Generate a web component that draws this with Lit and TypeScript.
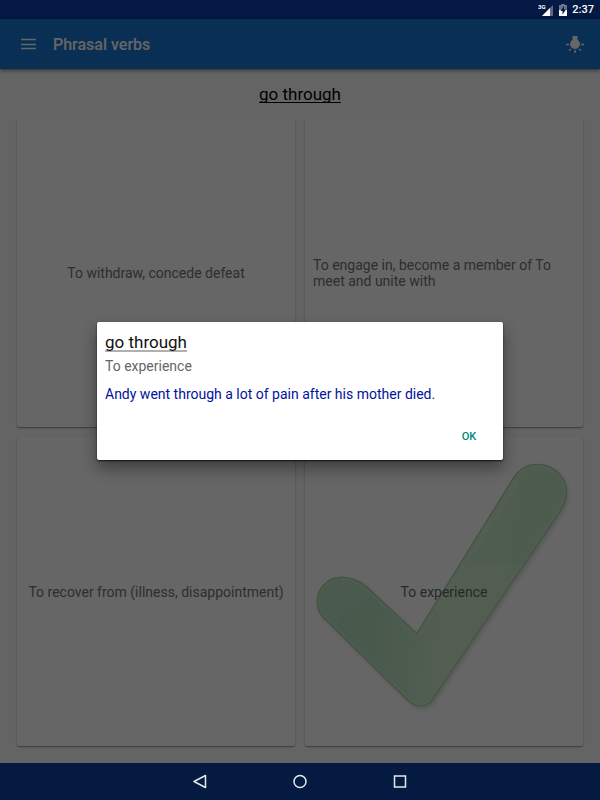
import { LitElement, html, css, svg } from "lit";
import { customElement, property, state } from "lit/decorators.js";

@customElement("answer-card")
class AnswerCard extends LitElement {
  @property() text = "";
  @property({ type: Boolean }) correct = false;

  static styles = css`
    :host {
      display: grid;
      min-width: 0;
    }
    .card {
      position: relative;
      display: flex;
      align-items: center;
      justify-content: center;
      padding: 8px;
      border: 0;
      border-radius: 2px;
      background: #fff;
      box-shadow: 0 1px 2px rgba(0, 0, 0, 0.35), 0 1px 1px rgba(0, 0, 0, 0.1);
      font: 400 14px/16px Roboto, "Noto Sans", sans-serif;
      color: #737373;
      text-align: left;
    }
    .tick {
      position: absolute;
      inset: 0;
      width: 100%;
      height: 100%;
    }
    .label {
      position: relative;
    }
    .card.correct .label {
      color: #5c6a5e;
    }
  `;

  render() {
    return html`<button class="card ${this.correct ? "correct" : ""}">
      ${this.correct
        ? html`<svg class="tick" viewBox="15 21 834 927" aria-hidden="true">
            <defs>
              <linearGradient id="body" x1="0" y1="0.5" x2="1" y2="0.6">
                <stop offset="0" stop-color="#b3dfbd" />
                <stop offset="0.25" stop-color="#b6e0c0" />
                <stop offset="0.55" stop-color="#cfedcb" />
                <stop offset="1" stop-color="#c2e6c5" />
              </linearGradient>
              <clipPath id="shape">${this.outline("")}</clipPath>
              <filter id="soft" x="-10%" y="-10%" width="120%" height="120%">
                <feGaussianBlur stdDeviation="7" />
              </filter>
            </defs>
            <g transform="translate(5 7)" filter="url(#soft)" opacity="0.14">${this.outline("#000")}</g>
            ${this.outline("url(#body)")}
            <g clip-path="url(#shape)">
              <path
                d="M0 0H849V400Q640 395 480 405Q200 460 105 585L0 700Z"
                fill="#c0e3c6"
                opacity="0.5"
              />
              <path d="M350 612L646 155" stroke="#d3ebd3" stroke-width="24" opacity="0.7" />
              <g fill="none" stroke="#cdebc8" stroke-width="22" opacity="0.5">${this.outline("none")}</g>
              <g fill="none" stroke="#a6d5a0" stroke-width="8">${this.outline("none")}</g>
            </g>
          </svg>`
        : ""}
      <span class="label">${this.text}</span>
    </button>`;
  }

  private outline(fill: string) {
    return svg`<path fill=${fill || "#000"} d="M50 518C50 470 85 440 125 440C152 440 180 450 202 470L350 608L638 145C655 118 680 101 710 101C762 101 801 140 801 183C801 207 793 228 782 245L402 805C385 837 347 838 322 812L75 570C60 556 50 538 50 518Z"/>`;
  }
}

@customElement("app-root")
class AppRoot extends LitElement {
  @state() private open = true;

  private answers = [
    { text: "To withdraw, concede defeat" },
    { text: "To engage in, become a member of To meet and unite with" },
    { text: "To recover from (illness, disappointment)" },
    { text: "To experience", correct: true },
  ];

  static styles = css`
    :host {
      display: flex;
      flex-direction: column;
      min-height: 100vh;
      font-family: Roboto, "Noto Sans", sans-serif;
      background: #fafafa;
    }
    button {
      padding: 0;
      border: 0;
      background: none;
      font-family: inherit;
    }
    svg {
      display: block;
    }
    .status {
      display: flex;
      align-items: center;
      justify-content: flex-end;
      height: 19px;
      padding: 0 6px;
      gap: 5px;
      background: #041a44;
      color: #fff;
      font-size: 11px;
      line-height: 19px;
      font-weight: 500;
    }
    .stage {
      position: relative;
      flex: 1;
      display: flex;
      flex-direction: column;
    }
    .bar {
      display: flex;
      align-items: center;
      height: 50px;
      padding: 0 16px 0 20px;
      gap: 17px;
      background: #1976d2;
      box-shadow: 0 1px 4px rgba(0, 0, 0, 0.6);
      color: #fff;
    }
    .title {
      flex: 1;
      margin: 0;
      padding-top: 2px;
      font-size: 16px;
      line-height: 20px;
      font-weight: 500;
    }
    main {
      flex: 1;
      display: flex;
      flex-direction: column;
      padding: 2px 17px 17px;
    }
    .phrase {
      margin: 0;
      font-size: 17px;
      line-height: 47px;
      font-weight: 400;
      text-align: center;
      color: #000;
    }
    .word {
      text-decoration: underline;
      text-decoration-thickness: 1px;
      text-underline-offset: 2px;
      text-decoration-skip-ink: none;
    }
    .grid {
      flex: 1;
      display: grid;
      grid-template-columns: 1fr 1fr;
      grid-template-rows: 1fr 1fr;
      gap: 10px;
    }
    .scrim {
      position: absolute;
      inset: 0;
      display: flex;
      align-items: center;
      padding: 0 97px;
      background: rgba(0, 0, 0, 0.6);
    }
    .dialog {
      flex: 1;
      display: flex;
      flex-direction: column;
      padding: 8px;
      border-radius: 2px;
      background: #fff;
      box-shadow: 0 8px 16px rgba(0, 0, 0, 0.4), 0 1px 2px rgba(0, 0, 0, 0.7);
    }
    .dialog h2 {
      margin: 0;
      font-size: 17px;
      line-height: 24px;
      font-weight: 400;
      color: #111;
    }
    .dialog .word {
      text-decoration-color: #b0b0b0;
      text-decoration-thickness: 2px;
    }
    .dialog p {
      margin: 0;
      font-size: 14px;
      line-height: 24px;
      color: #666;
    }
    .dialog .example {
      margin-top: 4px;
      color: #00139b;
    }
    .actions {
      display: flex;
      justify-content: flex-end;
      padding: 16px 8px 2px;
    }
    .ok {
      width: 36px;
      height: 28px;
      font-size: 11px;
      font-weight: 500;
      color: #00897b;
    }
    .nav {
      display: flex;
      align-items: center;
      justify-content: center;
      gap: 80px;
      height: 37px;
      background: #041a40;
    }
  `;

  render() {
    return html`
      <div class="status">
        <svg width="30" height="15" viewBox="0 0 30 15" role="img" aria-label="Signal and battery">
          <text x="1" y="7" font-size="6" font-weight="700" fill="#fff">3G</text>
          <path d="M16 3V14H5Z" fill="#fff" opacity="0.35" />
          <path d="M13 6V14H5Z" fill="#fff" />
          <path d="M22 3H24V2H28V3H30V8H22Z" fill="#65758f" />
          <path d="M22 8H30V14H22Z" fill="#fff" />
          <path d="M27 4L23.500 9H25.500V12.500L29 7.500H27Z" fill="#041a44" />
        </svg>
        <span>2:37</span>
      </div>
      <div class="stage">
        <header class="bar">
          <button aria-label="Menu">
            <svg width="16" height="12" viewBox="0 0 16 12">
              <path d="M1 1.500H16M1 6.500H16M1 10.500H16" stroke="#fff" stroke-width="1.500" />
            </svg>
          </button>
          <h1 class="title">Phrasal verbs</h1>
          <button aria-label="Hint">
            <svg width="18" height="18" viewBox="0 0 18 18" fill="#fff">
              <path d="M6.500 1H11.500V4.700A5 5 0 1 1 6.500 4.700Z" />
              <path
                d="M0 9.500H3M15 9.500H18M9 15V18M3 15.500L5 14M15 15.500L13 14"
                stroke="#fff"
                stroke-width="1.500"
              />
            </svg>
          </button>
        </header>
        <main>
          <h2 class="phrase"><span class="word">go through</span></h2>
          <div class="grid">
            ${this.answers.map(
              (a) => html`<answer-card .text=${a.text} .correct=${!!a.correct}></answer-card>`
            )}
          </div>
        </main>
        ${this.open
          ? html`<div class="scrim">
              <section class="dialog" role="dialog" aria-labelledby="dlg">
                <h2 id="dlg"><span class="word">go through</span></h2>
                <p>To experience</p>
                <p class="example">Andy went through a lot of pain after his mother died.</p>
                <div class="actions">
                  <button class="ok" @click=${() => (this.open = false)}>OK</button>
                </div>
              </section>
            </div>`
          : ""}
      </div>
      <nav class="nav">
        <button aria-label="Back">
          <svg width="20" height="20" viewBox="0 0 20 20">
            <path d="M4 9.500L15.500 3.500V15.500Z" fill="none" stroke="#e6e9ef" stroke-width="1.500" stroke-linejoin="round" />
          </svg>
        </button>
        <button aria-label="Home">
          <svg width="20" height="20" viewBox="0 0 20 20">
            <circle cx="10" cy="9.500" r="6" fill="none" stroke="#e6e9ef" stroke-width="1.500" />
          </svg>
        </button>
        <button aria-label="Recent apps">
          <svg width="20" height="20" viewBox="0 0 20 20">
            <rect x="4.500" y="4" width="11" height="11" fill="none" stroke="#e6e9ef" stroke-width="1.500" />
          </svg>
        </button>
      </nav>
    `;
  }
}
